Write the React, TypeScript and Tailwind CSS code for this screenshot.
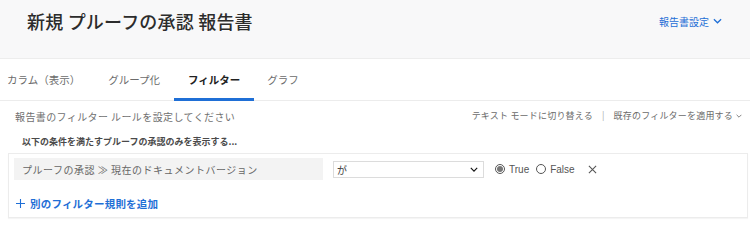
const jp = "font-['Noto_Sans_CJK_JP','Noto_Sans',sans-serif]";

function Chevron({ className }: { className?: string }) {
  return (
    <svg viewBox="0 0 10 6" className={className} fill="none" stroke="currentColor" strokeWidth="1.4">
      <path d="M1 1l4 4 4-4" />
    </svg>
  );
}

function Radio({ checked }: { checked?: boolean }) {
  return (
    <span className="w-[10px] h-[10px] rounded-full border border-[#555] bg-white flex items-center justify-center">
      {checked && <span className="w-[6px] h-[6px] rounded-full bg-[#777]" />}
    </span>
  );
}

const tabs = [
  { label: "カラム（表示）", pad: "pl-[7px] pr-[14px]" },
  { label: "グループ化", pad: "px-[14px]" },
  { label: "フィルター", pad: "px-[14px]" },
  { label: "グラフ", pad: "pl-[13px] pr-[14px]" },
];

export default function App() {
  return (
    <div className={`w-[750px] h-[249px] bg-white overflow-hidden ${jp}`}>
      <div className="h-[59px] bg-[#f8f8f9] border-b border-[#ededed] flex items-start justify-between pl-[27px] pr-[28px] pt-[9px]">
        <h1 className="text-[18px] leading-[24px] font-medium text-[#2c2c2c] tracking-[0.2px]">新規 プルーフの承認 報告書</h1>
        <div className="flex items-center gap-[4px] h-[24px] text-[#1f6fd6] text-[10px]">
          <span>報告書設定</span>
          <Chevron className="w-[9px] h-[6px]" />
        </div>
      </div>

      <div className="h-[42px] border-b border-[#ececec] flex items-stretch">
        {tabs.map((t, i) => (
          <div
            key={t.label}
            className={`relative flex items-center text-[10.5px] ${t.pad} ${
              i === 2 ? "font-bold text-[#222]" : "text-[#6b6b6b]"
            }`}
          >
            {t.label}
            {i === 2 && <span className="absolute left-0 right-0 bottom-[-1px] h-[3px] bg-[#1f6fd6]" />}
          </div>
        ))}
      </div>

      <div className="flex items-center justify-between h-[30px] pl-[15px] pr-[8px]">
        <span className="text-[10px] tracking-[0.4px] text-[#707070]">報告書のフィルター ルールを設定してください</span>
        <div className="flex items-center text-[9px] text-[#6b6b6b] tracking-[0.2px]">
          <span>テキスト モードに切り替える</span>
          <span className="mx-[9px] text-[#aaa]">|</span>
          <span>既存のフィルターを適用する</span>
          <Chevron className="w-[6px] h-[4px] ml-[3px]" />
        </div>
      </div>

      <div className="pl-[22px] pt-[4px] h-[22px] text-[9px] font-bold text-[#4a4a4a] leading-[14px]">
        以下の条件を満たすプルーフの承認のみを表示する...
      </div>

      <div className="ml-[8px] mr-[2px] h-[65px] border border-[#ececec] shadow-[0_1px_1px_rgba(0,0,0,0.04)] px-[5px] pt-[4px]">
        <div className="flex items-center h-[22px]">
          <div className="w-[309px] h-[22px] bg-[#f3f3f3] flex items-center pl-[8px] text-[10px] text-[#666] tracking-[0.5px]">
            プルーフの承認 ≫ 現在のドキュメントバージョン
          </div>
          <div className="ml-[10px] w-[151px] h-[17px] border border-[#dcdcdc] bg-white flex items-center justify-between pl-[3px] pr-[5px] text-[10px] text-[#444]">
            <span>が</span>
            <Chevron className="w-[8px] h-[5px] text-[#111]" />
          </div>
          <div className="ml-[11px] flex items-center text-[10px] text-[#555] font-['Liberation_Sans',sans-serif]">
            <Radio checked />
            <span className="ml-[4px]">True</span>
            <span className="ml-[7px]"><Radio /></span>
            <span className="ml-[4px]">False</span>
          </div>
          <svg viewBox="0 0 10 10" className="ml-[13px] w-[9px] h-[9px] text-[#555]" fill="none" stroke="currentColor" strokeWidth="1.2">
            <path d="M1 1l8 8M9 1l-8 8" />
          </svg>
        </div>
        <div className="flex items-center mt-[16px] pl-[2px] text-[#1f6fd6]">
          <svg viewBox="0 0 10 10" className="w-[9px] h-[9px]" fill="none" stroke="currentColor" strokeWidth="1.2">
            <path d="M5 0v10M0 5h10" />
          </svg>
          <span className="ml-[5px] text-[10.5px] font-bold tracking-[0.2px]">別のフィルター規則を追加</span>
        </div>
      </div>
    </div>
  );
}
